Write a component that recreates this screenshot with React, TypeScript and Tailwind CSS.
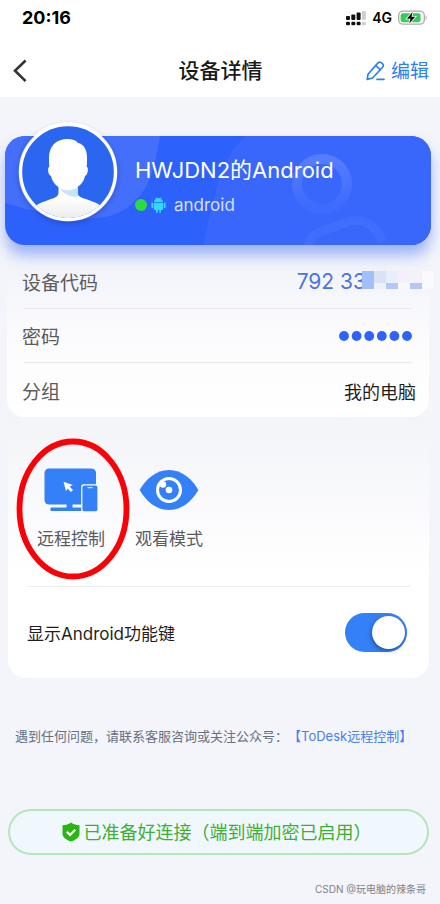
import { useState } from 'react';

function StatusBar() {
  return (
    <div className="flex h-9 items-center justify-between pl-[22px] pr-3 text-black">
      <span className="text-lg font-bold">20:16</span>
      <div className="flex items-center gap-1.5">
        <svg width="20" height="16" viewBox="0 0 20 16" fill="#111">
          <rect x="0" y="6" width="4" height="4" rx="1" />
          <rect x="5.3" y="4.5" width="4" height="5.5" rx="1" />
          <rect x="10.6" y="2.5" width="4" height="7.5" rx="1" />
          <rect x="15.9" y="1" width="4" height="9" rx="1" fill="#cfcfcf" />
          <rect x="0" y="11.8" width="4" height="3.4" rx="1.2" />
          <rect x="5.3" y="11.8" width="4" height="3.4" rx="1.2" />
          <rect x="10.6" y="11.8" width="4" height="3.4" rx="1.2" />
          <rect x="15.9" y="11.8" width="4" height="3.4" rx="1.2" fill="#cfcfcf" />
        </svg>
        <span className="text-sm font-semibold">4G</span>
        <svg width="30" height="16" viewBox="0 0 30 16">
          <rect x="0.7" y="1.2" width="25.6" height="13" rx="4.2" fill="#fff" stroke="#a9a9a9" strokeWidth="1.3" />
          <rect x="2.6" y="3.2" width="20" height="9" rx="2.4" fill="#36cc5a" />
          <path d="M27.6 5.4c1.4.4 1.4 4.2 0 4.6z" fill="#a9a9a9" />
          <path d="M14.6 1.8 8.900 8.700h3.600l-1.300 5 6-7h-3.700z" fill="#111" stroke="#fff" strokeWidth="1.6" paintOrder="stroke" />
        </svg>
      </div>
    </div>
  );
}

function NavBar() {
  return (
    <header className="grid h-[61px] grid-cols-3 items-center pl-3 pr-[11px] pt-2">
      <button type="button" aria-label="返回" className="w-8">
        <svg width="16" height="24" viewBox="0 0 16 24" fill="none" stroke="#333" strokeWidth="2.6">
          <path d="M13.600 1.500 3 11.800l10.600 10.300" />
        </svg>
      </button>
      <h1 className="text-center text-[21px] font-medium text-[#1a1a1a]">设备详情</h1>
      <button type="button" className="flex items-center justify-end gap-1.5 text-[19px] text-[#2f80ed]">
        <svg width="19" height="20" viewBox="0 0 19 20" fill="none" stroke="currentColor" strokeWidth="1.7" strokeLinejoin="round" strokeLinecap="round">
          <path d="M1.200 18.300 2 13.200 11.800 2.100c1-1.100 2.500-1.200 3.600-.3l1 .9c1.100 1 1.200 2.400.2 3.500L6.500 17z" />
          <path d="M9.800 4.600l4.600 4" />
          <path d="M11 18.300h7" />
        </svg>
        <span className="pt-1">编辑</span>
      </button>
    </header>
  );
}

function Avatar() {
  return (
    <svg className="size-[100px]" viewBox="0 0 100 100">
      <defs>
        <clipPath id="avatar-clip">
          <circle cx="50" cy="50" r="46" />
        </clipPath>
        <linearGradient id="avatar-body" x1="0" y1="0" x2="0" y2="1">
          <stop offset="0.4" stopColor="#fff" />
          <stop offset="1" stopColor="#e9e9ea" />
        </linearGradient>
      </defs>
      <circle cx="50" cy="50" r="48" fill="#2a66f0" />
      <g clipPath="url(#avatar-clip)">
        <path d="M16 85c6-5 15-7 20-9 4-2 4.500-3 4.500-7V58h19v11c0 4 1 5 5 7 6 2 14 4 20 9v15H16z" fill="url(#avatar-body)" />
        <path d="M41 66c4 3 14 3 19-1v10c-8 0-14-3-19-9z" fill="#c8e3f5" />
        <path d="M50 17c-12 0-19 7-19 19 0 4 0 6 .3 9-2 0-1.500 8 1.700 9 1.500 8 9 14 17 14s15.500-6 17-14c3.200-1 3.700-9 1.700-9 .3-3 .3-5 .3-9 0-8-3-14-9-15-2-3-6-4-10-4z" fill="#fff" />
      </g>
      <circle cx="50" cy="50" r="47.5" fill="none" stroke="#fff" strokeWidth="3.4" />
    </svg>
  );
}

function AndroidIcon() {
  return (
    <svg width="15" height="16" viewBox="0 0 15 16" fill="#35d6fb">
      <path d="M3 5.300C3.100 3.500 4 2.200 5.200 1.500L4.500.4l.4-.3.800 1.100a5 5 0 0 1 3.600 0L10.100.1l.4.3-.7 1.100C11 2.200 11.900 3.500 12 5.300z" />
      <path d="M3 5.900h9v6.300c0 .5-.4.900-.9.900H10v1.900a.9.900 0 0 1-1.800 0v-1.900H6.800v1.900a.9.900 0 0 1-1.800 0v-1.900H3.900a.9.900 0 0 1-.9-.9z" />
      <rect x="0.4" y="5.6" width="2" height="5.6" rx="1" />
      <rect x="12.6" y="5.6" width="2" height="5.6" rx="1" />
    </svg>
  );
}

function DeviceHero() {
  return (
    <section className="relative z-10 ml-[5px] mr-[9px] mt-[39px] rounded-[20px] bg-[#2d61fb] pb-7 pl-[130px] pt-5 text-white shadow-[0_10px_14px_rgba(75,120,250,0.5)]">
      <div className="absolute inset-0 overflow-hidden rounded-[20px]">
        <svg className="h-full w-full" viewBox="0 0 426 109" preserveAspectRatio="xMidYMid slice">
          <defs>
            <linearGradient id="ring" x1="0" y1="0" x2="0" y2="1">
              <stop offset="0" stopColor="#547dff" />
              <stop offset="1" stopColor="#3e6afd" />
            </linearGradient>
          </defs>
          <path d="M0 0h155c-5 30-9 50-27 67-14 13-32 16-50 16C50 81 24 74 0 67z" fill="#436ffb" />
          <path d="M241 0h185v109H198c6-22 8-40 15-62C220 26 228 10 241 0z" fill="#3967fc" />
          <circle cx="317" cy="48" r="25" fill="none" stroke="url(#ring)" strokeWidth="10" />
          <path d="M303 112c2-12 9-15 17-18l20-7c16-7 32 2 37 19" fill="none" stroke="#416dfd" strokeWidth="9" />
        </svg>
      </div>
      <div className="absolute -top-[14px] left-[13px] rounded-full shadow-[0_2px_5px_rgba(0,0,0,0.18)]">
        <Avatar />
      </div>
      <h2 className="relative text-[22px] leading-7">HWJDN2的Android</h2>
      <div className="relative mt-[9px] flex items-center text-[17px] leading-6 text-[#d5e0ff]">
        <span className="size-3 rounded-full bg-[#2bdd3c]" />
        <span className="ml-1 mr-2">
          <AndroidIcon />
        </span>
        android
      </div>
    </section>
  );
}

const mosaic = [
  { top: '#a3bff8', bottom: '#a3bff8' },
  { top: '#dbe2f5', bottom: '#eef1fa' },
  { top: '#e8effc', bottom: '#b3c7f8' },
  { top: '#f3f0f9', bottom: '#f7f7fc' },
  { top: '#f4f2f9', bottom: '#b3c7f8' },
  { top: '#fafafc', bottom: '#fafafc' },
];

function DeviceInfo() {
  return (
    <dl className="ml-[7px] mr-[11px] rounded-b-[18px] bg-gradient-to-b from-[#eff1f9] via-[#fbfbfd] to-white px-[17px] pt-[10px] text-[19px] text-[#5c5c5e]">
      <div className="flex h-[54px] items-center justify-between border-b border-[#e8e9ec]">
        <dt className="-ml-0.5 pt-1.5">设备代码</dt>
        <dd className="-mr-[22px] flex items-center text-[21px] text-[#4a74e6]">
          792 33
          <svg className="-ml-1 mb-1" width="72" height="18" viewBox="0 0 72 18" shapeRendering="crispEdges">
            {mosaic.map((cell, i) => (
              <g key={i}>
                <rect x={i * 12} y="0" width="12" height="12" fill={cell.top} />
                <rect x={i * 12} y="12" width="12" height="6" fill={cell.bottom} />
              </g>
            ))}
          </svg>
        </dd>
      </div>
      <div className="flex h-[54px] items-center justify-between border-b border-[#e8e9ec]">
        <dt className="-ml-0.5 pt-1.5">密码</dt>
        <dd>
          <svg width="73" height="10" viewBox="0 0 73 10" fill="#2e62fa" role="img" aria-label="密码已隐藏">
            {[0, 1, 2, 3, 4, 5].map((i) => (
              <circle key={i} cx={5 + i * 12.6} cy="5" r="4.9" />
            ))}
          </svg>
        </dd>
      </div>
      <div className="flex h-[54px] items-center justify-between">
        <dt className="-ml-0.5 pt-1.5">分组</dt>
        <dd className="-mr-1 pt-1.5 text-lg text-[#1f1f1f]">我的电脑</dd>
      </div>
    </dl>
  );
}

function RemoteIcon() {
  return (
    <svg width="54" height="44" viewBox="0 0 54 44" fill="#3480f8">
      <rect x="0.5" y="0.5" width="51.5" height="36" rx="4.5" />
      <path d="M22.500 36h6v4h-6z" />
      <rect x="6.5" y="39.5" width="34" height="3.6" rx="0.6" />
      <path d="M19.500 13.800l9.300 3.300-3.200 1.500 3.400 3.400-2.100 1.900-3.200-3.500-1.700 2.800z" fill="#fff" />
      <rect x="37.200" y="16.3" width="17.5" height="28" rx="2.5" fill="#fdfdfe" />
      <rect x="38.400" y="17.6" width="15" height="25.6" rx="1.8" />
      <path d="M43.500 19.700h5" stroke="#fff" strokeWidth="1" />
    </svg>
  );
}

function EyeIcon() {
  return (
    <svg width="60" height="42" viewBox="0 0 60 42">
      <path d="M.6 21C7 10 17 1 30 1s23 9 29.400 20C53 32 43 41 30 41S7 32 .6 21z" fill="#3480f8" />
      <circle cx="30" cy="21" r="11.5" fill="none" stroke="#fff" strokeWidth="3" />
      <circle cx="30" cy="21" r="3.3" fill="#fff" />
      <circle cx="24" cy="15.5" r="3.2" fill="#fff" />
    </svg>
  );
}

function ControlPanel() {
  const [showKeys, setShowKeys] = useState(true);

  return (
    <section className="ml-2 mr-[11px] rounded-b-[18px] bg-gradient-to-b from-[#f3f4f8] to-white to-60% px-[19px]">
      <div className="flex gap-[30px] border-b border-[#ebecee] pb-[34px] pl-[10px] pt-[51px] text-[17px] text-[#5a5a5c]">
        <button type="button" className="relative flex flex-col items-center">
          <span className="flex h-11 items-center">
            <RemoteIcon />
          </span>
          <span className="mt-3.5 leading-[26px]">远程控制</span>
          {/* highlight ring around the remote control entry */}
          <svg className="absolute -left-[21px] -top-[30px] max-w-none" width="114" height="142" viewBox="0 0 114 142">
            <ellipse cx="57" cy="71" rx="53.5" ry="67.5" fill="none" stroke="#fb0007" strokeWidth="5.8" />
          </svg>
        </button>
        <button type="button" className="flex flex-col items-center">
          <span className="flex h-11 items-center">
            <EyeIcon />
          </span>
          <span className="mt-3.5 leading-[26px]">观看模式</span>
        </button>
      </div>
      <label className="flex h-[91px] items-center justify-between pr-[3px] text-[17px] text-[#1f1f1f]">
        <span className="pt-1">显示Android功能键</span>
        <span className="relative">
          <input
            type="checkbox"
            role="switch"
            checked={showKeys}
            onChange={(e) => setShowKeys(e.target.checked)}
            className="peer block h-[39px] w-[62px] appearance-none rounded-full bg-gray-300 checked:bg-[#3480f8]"
          />
          <span className="pointer-events-none absolute left-0.5 top-[3px] size-[33px] rounded-full bg-white shadow-[-1px_2px_4px_rgba(0,0,0,0.35)] transition-transform peer-checked:translate-x-[25px]" />
        </span>
      </label>
    </section>
  );
}

export default function App() {
  return (
    <div className="min-h-screen bg-[#f4f5fa] font-['Inter','Noto_Sans_CJK_SC',sans-serif]">
      <div className="bg-white">
        <StatusBar />
        <NavBar />
      </div>
      <main>
        <DeviceHero />
        <DeviceInfo />
        <ControlPanel />
        <p className="mt-12 whitespace-nowrap pl-[15px] text-[13px] leading-5 text-[#657083] [text-spacing-trim:space-all]">
          遇到任何问题，请联系客服咨询或关注公众号：
          <a href="#todesk" className="text-[#4a7cf3]">【ToDesk远程控制】</a>
        </p>
        <button
          type="button"
          className="ml-2 mr-[11px] mt-[63px] flex h-[46px] w-[calc(100%-19px)] items-center justify-center gap-1 rounded-full border-2 border-[#b5e6ba] bg-[#f0f8fe] pr-1 text-lg text-[#3fae35]"
        >
          <svg width="18" height="20" viewBox="0 0 18 20">
            <path d="M9 .5c2.400 1.800 5.200 2.500 8.500 2.700v8.300c0 4-4 6.500-8.500 8-4.500-1.500-8.500-4-8.500-8V3.200C3.800 3 6.600 2.300 9 .5z" fill="#2bb514" />
            <path d="M4.800 9.700l3.300 3.200 5.200-5.200" fill="none" stroke="#fff" strokeWidth="2.2" />
          </svg>
          <span className="pt-0.5">已准备好连接（端到端加密已启用）</span>
        </button>
      </main>
      <footer className="mt-[26px] pr-3.5 text-right text-[10px] leading-4 text-[#808186]">CSDN @玩电脑的辣条哥</footer>
    </div>
  );
}
